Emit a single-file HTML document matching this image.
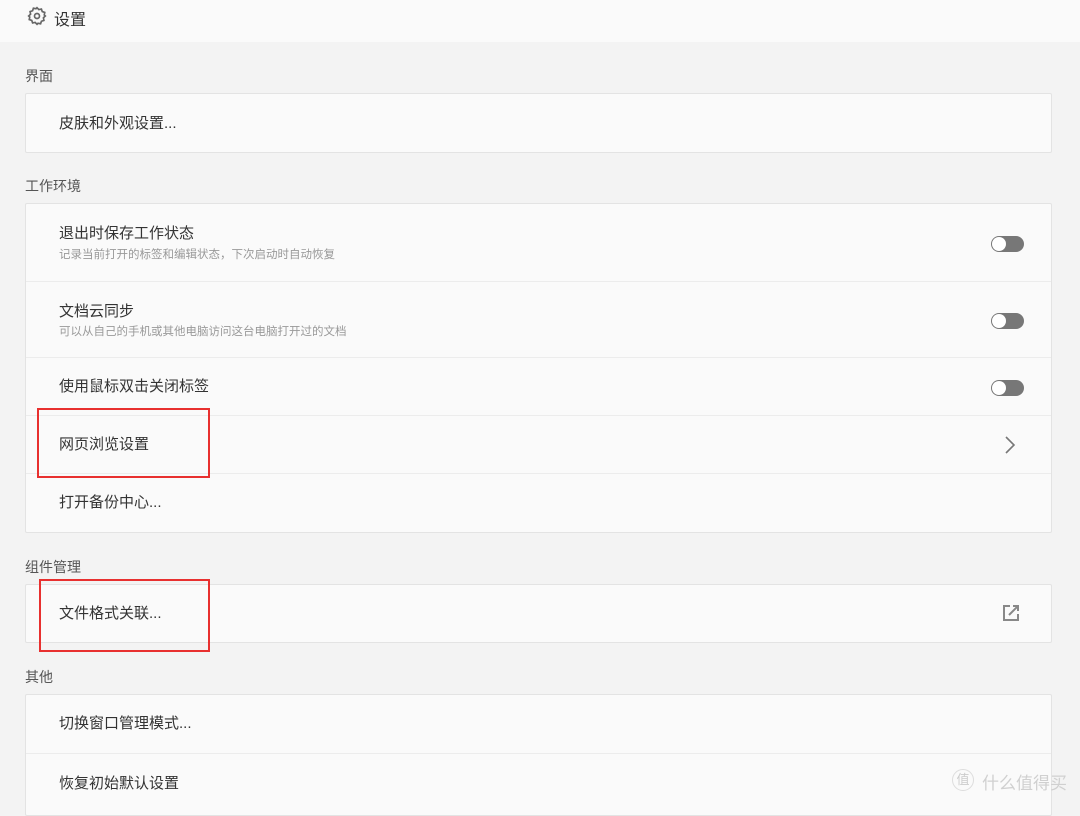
<!DOCTYPE html>
<html><head><meta charset="utf-8"><style>
body{margin:0;width:1080px;height:803px;overflow:hidden;background:#f3f3f3;font-family:"Liberation Sans","Noto Sans CJK SC",sans-serif;color:#333;position:relative}
.hdr{position:absolute;left:0;top:0;width:1080px;height:42px;background:#fafafa}
.hdr span{position:absolute;left:54px;top:6px;font-size:16px;color:#333}
.lbl{position:absolute;left:25px;font-size:14px;color:#555}
.card{position:absolute;left:25px;width:1025px;background:#fafafa;border:1px solid #e3e3e3;border-radius:2px}
.row{position:absolute;left:0;width:1025px;border-top:1px solid #ececec}
.row:first-child{border-top:none}
.t{position:absolute;left:33px;font-size:15px;color:#333}
.s{position:absolute;left:33px;font-size:11.5px;color:#999}
.tg{position:absolute;left:965px;width:33px;height:16px;border-radius:8px;background:#777}
.tg:after{content:"";position:absolute;left:1px;top:1px;width:14px;height:14px;border-radius:7px;background:#fff}
.red{position:absolute;border:2px solid #e8302f;box-sizing:border-box}
</style></head><body>
<div class="hdr">
<svg style="position:absolute;left:27px;top:6px" width="20" height="20" viewBox="0 0 24 24" fill="none" stroke="#666" stroke-width="2"><circle cx="12" cy="12" r="3"/><path d="M12 2l2.2 2.3 3.1-.6 1 3 3 1-.6 3.1L22 12l-2.3 2.2.6 3.1-3 1-1 3-3.1-.6L12 22l-2.2-2.3-3.1.6-1-3-3-1 .6-3.1L2 12l2.3-2.2-.6-3.1 3-1 1-3 3.1.6z"/></svg>
<span>设置</span></div>
<div class="lbl" style="top:66px">界面</div>
<div class="card" style="top:93px;height:58px"><div class="t" style="top:18px">皮肤和外观设置...</div></div>
<div class="lbl" style="top:176px">工作环境</div>
<div class="card" style="top:203px;height:328px">
<div class="row" style="top:0;height:77px"><div class="t" style="top:18px">退出时保存工作状态</div><div class="s" style="top:42px">记录当前打开的标签和编辑状态，下次启动时自动恢复</div><div class="tg" style="top:32px"></div></div>
<div class="row" style="top:77px;height:76px"><div class="t" style="top:18px">文档云同步</div><div class="s" style="top:41px">可以从自己的手机或其他电脑访问这台电脑打开过的文档</div><div class="tg" style="top:31px"></div></div>
<div class="row" style="top:153px;height:58px"><div class="t" style="top:17px">使用鼠标双击关闭标签</div><div class="tg" style="top:22px"></div></div>
<div class="row" style="top:211px;height:58px"><div class="t" style="top:17px">网页浏览设置</div><svg style="position:absolute;left:978px;top:19px" width="12" height="20" viewBox="0 0 12 20"><path d="M2 2l8 8-8 8" fill="none" stroke="#777" stroke-width="1.6"/></svg></div>
<div class="row" style="top:269px;height:59px"><div class="t" style="top:17px">打开备份中心...</div></div>
</div>
<div class="lbl" style="top:557px">组件管理</div>
<div class="card" style="top:584px;height:57px"><div class="t" style="top:17px">文件格式关联...</div>
<svg style="position:absolute;left:976px;top:19px" width="18" height="18" viewBox="0 0 18 18" fill="none" stroke="#888" stroke-width="2"><path d="M8 2H2v14h14v-6"/><path d="M7 11l9-9M11 2h5v5"/></svg></div>
<div class="lbl" style="top:667px">其他</div>
<div class="card" style="top:694px;height:120px">
<div class="row" style="top:0;height:58px"><div class="t" style="top:17px">切换窗口管理模式...</div></div>
<div class="row" style="top:58px;height:60px"><div class="t" style="top:18px">恢复初始默认设置</div></div>
</div>
<div class="red" style="left:37px;top:408px;width:173px;height:70px"></div>
<div class="red" style="left:39px;top:579px;width:171px;height:73px"></div>
<div style="position:absolute;left:952px;top:769px;width:20px;height:20px;border:1.5px solid #ddd;border-radius:50%;color:#ccc;font-size:13px;text-align:center;line-height:20px">值</div>
<div style="position:absolute;left:982px;top:769px;font-size:17px;color:#d0d0d0">什么值得买</div>
</body></html>
